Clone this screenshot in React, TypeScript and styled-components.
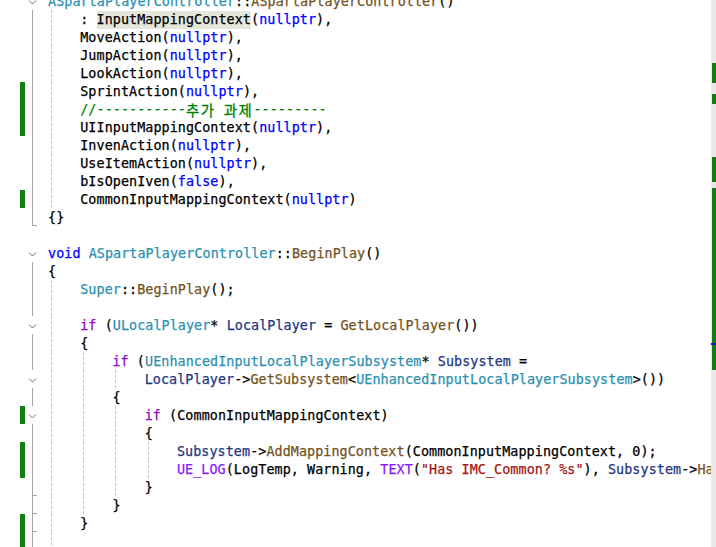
import React from "react";
import styled, { createGlobalStyle } from "styled-components";

type Kind = "p" | "t" | "f" | "k" | "c" | "m" | "s" | "v" | "g" | "h" | "kr";
type Outline = "none" | "fold" | "line" | "end";
type Tok = [Kind, string];

interface ILine {
  level: number;
  outline: Outline;
  changed?: boolean;
  tokens: Tok[];
}

const COLORS: Record<Kind, string> = {
  p: "#000000",
  t: "#2b91af",
  f: "#74531f",
  k: "#0000ff",
  c: "#8f08c4",
  m: "#8a1bff",
  s: "#a31515",
  v: "#1f377f",
  g: "#008000",
  h: "#000000",
  kr: "#008000",
};

const init = (name: string, value: string, last = false): Tok[] => [
  ["p", name + "("],
  ["k", value],
  ["p", last ? ")" : "),"],
];

const LINES: ILine[] = [
  {
    level: 0,
    outline: "fold",
    tokens: [
      ["t", "ASpartaPlayerController"],
      ["p", "::"],
      ["f", "ASpartaPlayerController"],
      ["p", "()"],
    ],
  },
  {
    level: 1,
    outline: "line",
    tokens: [
      ["p", ": "],
      ["h", "InputMappingContext"],
      ["p", "("],
      ["k", "nullptr"],
      ["p", "),"],
    ],
  },
  { level: 1, outline: "line", tokens: init("MoveAction", "nullptr") },
  { level: 1, outline: "line", tokens: init("JumpAction", "nullptr") },
  { level: 1, outline: "line", tokens: init("LookAction", "nullptr") },
  { level: 1, outline: "line", changed: true, tokens: init("SprintAction", "nullptr") },
  {
    level: 1,
    outline: "line",
    changed: true,
    tokens: [
      ["g", "//-----------"],
      ["kr", "추가"],
      ["g", " "],
      ["kr", "과제"],
      ["g", "---------"],
    ],
  },
  { level: 1, outline: "line", changed: true, tokens: init("UIInputMappingContext", "nullptr") },
  { level: 1, outline: "line", tokens: init("InvenAction", "nullptr") },
  { level: 1, outline: "line", tokens: init("UseItemAction", "nullptr") },
  { level: 1, outline: "line", tokens: init("bIsOpenIven", "false") },
  {
    level: 1,
    outline: "line",
    changed: true,
    tokens: init("CommonInputMappingContext", "nullptr", true),
  },
  { level: 0, outline: "end", tokens: [["p", "{}"]] },
  { level: 0, outline: "none", tokens: [] },
  {
    level: 0,
    outline: "fold",
    tokens: [
      ["k", "void"],
      ["p", " "],
      ["t", "ASpartaPlayerController"],
      ["p", "::"],
      ["f", "BeginPlay"],
      ["p", "()"],
    ],
  },
  { level: 0, outline: "line", tokens: [["p", "{"]] },
  {
    level: 1,
    outline: "line",
    tokens: [
      ["t", "Super"],
      ["p", "::"],
      ["f", "BeginPlay"],
      ["p", "();"],
    ],
  },
  { level: 1, outline: "line", tokens: [] },
  {
    level: 1,
    outline: "fold",
    tokens: [
      ["c", "if"],
      ["p", " ("],
      ["t", "ULocalPlayer"],
      ["p", "* "],
      ["v", "LocalPlayer"],
      ["p", " = "],
      ["f", "GetLocalPlayer"],
      ["p", "())"],
    ],
  },
  { level: 1, outline: "line", tokens: [["p", "{"]] },
  {
    level: 2,
    outline: "line",
    tokens: [
      ["c", "if"],
      ["p", " ("],
      ["t", "UEnhancedInputLocalPlayerSubsystem"],
      ["p", "* "],
      ["v", "Subsystem"],
      ["p", " ="],
    ],
  },
  {
    level: 3,
    outline: "fold",
    tokens: [
      ["v", "LocalPlayer"],
      ["p", "->"],
      ["f", "GetSubsystem"],
      ["p", "<"],
      ["t", "UEnhancedInputLocalPlayerSubsystem"],
      ["p", ">())"],
    ],
  },
  { level: 2, outline: "line", tokens: [["p", "{"]] },
  {
    level: 3,
    outline: "fold",
    changed: true,
    tokens: [
      ["c", "if"],
      ["p", " (CommonInputMappingContext)"],
    ],
  },
  { level: 3, outline: "line", tokens: [["p", "{"]] },
  {
    level: 4,
    outline: "line",
    changed: true,
    tokens: [
      ["v", "Subsystem"],
      ["p", "->"],
      ["f", "AddMappingContext"],
      ["p", "(CommonInputMappingContext, 0);"],
    ],
  },
  {
    level: 4,
    outline: "line",
    changed: true,
    tokens: [
      ["m", "UE_LOG"],
      ["p", "(LogTemp, Warning, "],
      ["m", "TEXT"],
      ["p", "("],
      ["s", '"Has IMC_Common? %s"'],
      ["p", "), "],
      ["v", "Subsystem"],
      ["p", "->"],
      ["f", "HasMappingContext"],
      ["p", "(CommonInputMappingContext) ? "],
      ["m", "TEXT"],
      ["p", "("],
      ["s", '"Yes"'],
      ["p", ") : "],
      ["m", "TEXT"],
      ["p", "("],
      ["s", '"No"'],
      ["p", "));"],
    ],
  },
  { level: 3, outline: "end", tokens: [["p", "}"]] },
  { level: 2, outline: "end", tokens: [["p", "}"]] },
  { level: 1, outline: "end", changed: true, tokens: [["p", "}"]] },
  { level: 1, outline: "line", changed: true, tokens: [] },
];

// overview marks on the scrollbar: [top, height, color]
const MARKS: [number, number, string][] = [
  [63, 20, "#127d12"],
  [94, 10, "#127d12"],
  [157, 25, "#127d12"],
  [188, 182, "#127d12"],
];

const GlobalStyle = createGlobalStyle`
  html, body {
    margin: 0;
    padding: 0;
    background: #ffffff;
  }
`;

const Editor = styled.div`
  display: flex;
  width: 716px;
  height: 547px;
  overflow: hidden;
  background: #ffffff;
`;

const Viewport = styled.div`
  flex: 1;
  min-width: 0;
  overflow: hidden;
`;

const Lines = styled.div`
  display: flex;
  flex-direction: column;
  margin-top: -8px;
`;

const Row = styled.div`
  display: flex;
  height: 18px;
  flex-shrink: 0;
`;

const ChangeGutter = styled.div`
  width: 26px;
  padding-left: 20px;
  box-sizing: border-box;
  flex-shrink: 0;
`;

const ChangeMark = styled.div<{ $on: boolean }>`
  width: 5px;
  height: 100%;
  background: ${({ $on }) => ($on ? "#127d12" : "transparent")};
`;

const OutlineCell = styled.div`
  width: 22px;
  flex-shrink: 0;
  display: flex;
  flex-direction: column;
`;

const Rail = styled.div<{ $end: boolean }>`
  flex: 1;
  width: 4px;
  margin-left: 6px;
  border-left: 1px solid #a5a5a5;
  border-bottom: ${({ $end }) => ($end ? "1px solid #a5a5a5" : "none")};
`;

const Code = styled.div`
  flex: 1;
  display: flex;
  align-items: center;
  white-space: pre;
  font-family: "DejaVu Sans Mono", "Liberation Mono", monospace;
  font-size: 13.4px;
  letter-spacing: 0.07px;
  line-height: 18px;
  padding-top: 1px;
  color: #000000;
  -webkit-text-stroke: 0.25px currentColor;
`;

const Indent = styled.span`
  display: inline-block;
  flex-shrink: 0;
  width: 4ch;
  height: 18px;
  margin-top: -1px;
  background-image: linear-gradient(#c6c6c6 60%, transparent 60%);
  background-size: 1px 5px;
  background-repeat: repeat-y;
  background-position: 3px 0;
`;

const Token = styled.span<{ $kind: Kind }>`
  color: ${({ $kind }) => COLORS[$kind]};
  background: ${({ $kind }) => ($kind === "h" ? "#e4e7da" : "transparent")};
  line-height: 18px;
  ${({ $kind }) =>
    $kind === "kr"
      ? `font-family: "Noto Sans CJK KR", sans-serif; letter-spacing: 1.6px; font-size: 14.4px; -webkit-text-stroke: 0.3px currentColor;`
      : ""}
`;

const Overview = styled.div`
  position: relative;
  width: 5px;
  flex-shrink: 0;
  background: #e8e8e8;
`;

const OverviewMark = styled.div<{ $color: string }>`
  position: absolute;
  left: 1px;
  right: 0;
  background: ${({ $color }) => $color};
`;

const Caret = styled.div`
  position: absolute;
  left: 0;
  right: 0;
  top: 343px;
  height: 2px;
  background: #1010e8;
`;

const Chevron = () => (
  <svg width="22" height="18" viewBox="0 0 22 18">
    <polyline
      points="3,8.5 6.5,12 10,8.5"
      fill="none"
      stroke="#707070"
      strokeWidth="1"
    />
  </svg>
);

const OutlineMargin: React.FC<{ kind: Outline }> = ({ kind }) => (
  <OutlineCell>
    {kind === "fold" && <Chevron />}
    {(kind === "line" || kind === "end") && <Rail $end={kind === "end"} />}
  </OutlineCell>
);

const CodeLine: React.FC<{ line: ILine }> = ({ line }) => (
  <Row>
    <ChangeGutter>
      <ChangeMark $on={!!line.changed} />
    </ChangeGutter>
    <OutlineMargin kind={line.outline} />
    <Code>
      {Array.from({ length: line.level }).map((_, i) => (
        <Indent key={i} />
      ))}
      {line.tokens.map(([kind, text], i) => (
        <Token key={i} $kind={kind}>
          {text}
        </Token>
      ))}
    </Code>
  </Row>
);

export default function App() {
  return (
    <>
      <GlobalStyle />
      <Editor>
        <Viewport>
          <Lines>
            {LINES.map((line, i) => (
              <CodeLine key={i} line={line} />
            ))}
          </Lines>
        </Viewport>
        <Overview>
          {MARKS.map(([top, height, color], i) => (
            <OverviewMark key={i} $color={color} style={{ top, height }} />
          ))}
          <Caret />
        </Overview>
      </Editor>
    </>
  );
}
